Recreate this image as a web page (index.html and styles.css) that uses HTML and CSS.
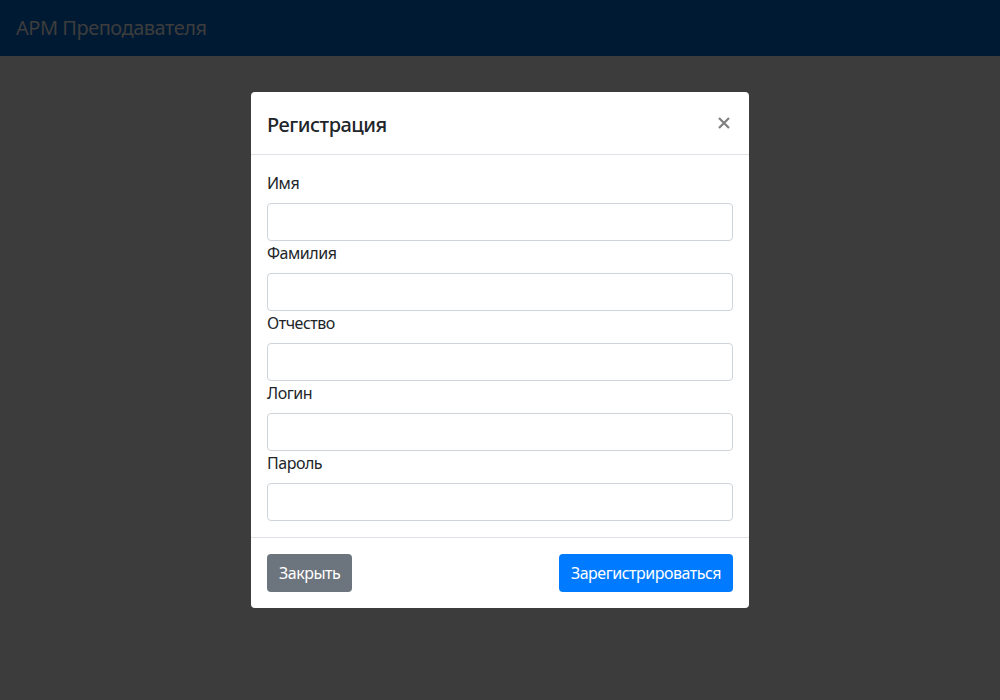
FILE: index.html
```html
<!DOCTYPE html>
<html lang="ru">
<head>
<meta charset="utf-8">
<title>АРМ Преподавателя</title>
<link rel="stylesheet" href="styles.css">
</head>
<body>
<nav class="navbar">
  <span class="brand">АРМ Преподавателя</span>
</nav>
<main class="stage">
  <div class="modal">
    <div class="modal-header">
      <h5 class="modal-title">Регистрация</h5>
      <span class="close" aria-label="Закрыть">
        <svg width="12" height="12" viewBox="0 0 12 12"><path d="M1 1L11 11M11 1L1 11" stroke="#808080" stroke-width="2.2" fill="none"/></svg>
      </span>
    </div>
    <div class="modal-body">
      <label class="label">Имя</label>
      <div class="input"></div>
      <label class="label">Фамилия</label>
      <div class="input"></div>
      <label class="label">Отчество</label>
      <div class="input"></div>
      <label class="label">Логин</label>
      <div class="input"></div>
      <label class="label">Пароль</label>
      <div class="input"></div>
    </div>
    <div class="modal-footer">
      <button class="btn btn-secondary">Закрыть</button>
      <button class="btn btn-primary">Зарегистрироваться</button>
    </div>
  </div>
</main>
</body>
</html>
```
FILE: styles.css
```css
* { box-sizing: border-box; }
html, body { margin: 0; height: 100%; }
body {
  background: #3c3c3c;
  font-family: "Noto Sans", "Open Sans", sans-serif;
  font-size: 16px;
  line-height: 1.5;
  letter-spacing: -0.03em;
  color: #212529;
}
.navbar {
  height: 56px;
  background: #001a33;
  display: flex;
  align-items: center;
  padding: 0 16px;
}
.brand {
  font-size: 20px;
  color: #3d3d3d;
}
.stage {
  display: flex;
  justify-content: center;
  padding-top: 36px;
}
.modal {
  width: 498px;
  background: #fff;
  border-radius: 4px;
  overflow: hidden;
}
.modal-header {
  display: flex;
  justify-content: space-between;
  align-items: center;
  padding: 16px;
  border-bottom: 1px solid #dee2e6;
}
.modal-title {
  margin: 2px 0 -2px;
  font-size: 20px;
  font-weight: 500;
  line-height: 30px;
}
.close {
  display: flex;
  width: 12px;
  height: 12px;
  margin-right: 3px;
}
.modal-body {
  padding: 16px;
}
.label {
  display: block;
  margin-bottom: 8px;
  line-height: 24px;
}
.input {
  height: 38px;
  border: 1px solid #ced4da;
  border-radius: 4px;
}
.modal-footer {
  display: flex;
  justify-content: space-between;
  padding: 16px;
  border-top: 1px solid #dee2e6;
}
.btn {
  height: 38px;
  padding: 0 12px;
  border: 0;
  border-radius: 4px;
  font-family: inherit;
  font-size: 16px;
  letter-spacing: -0.03em;
  color: #fff;
}
.btn-secondary { background: #6c757d; }
.btn-primary { background: #007bff; }
```
